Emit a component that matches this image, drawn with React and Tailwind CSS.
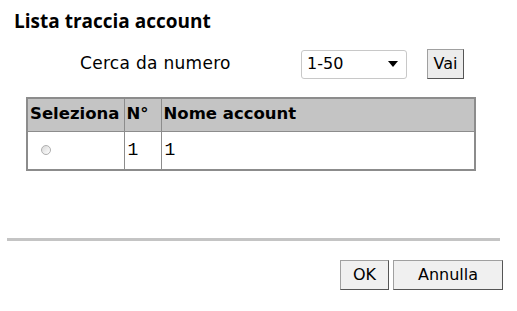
export default function App() {
  return (
    <div className="w-[517px] h-[311px] bg-white text-black relative overflow-hidden">
      <h1 className="pl-[14px] pt-[9px] text-[19px] leading-[24px] font-bold font-['Open_Sans',sans-serif]">
        Lista traccia account
      </h1>

      <div className="flex items-center mt-[16px] h-[30px]">
        <span className="ml-[80px] w-[221px] text-[17px] tracking-[0.3px] font-['DejaVu_Sans',sans-serif]">
          Cerca da numero
        </span>
        <div className="w-[106px] h-[29px] border border-[#c8c8c8] rounded-[3px] flex items-center justify-between pl-[5px] pr-[7px] text-[16px] font-['DejaVu_Sans',sans-serif]">
          <span>1-50</span>
          <svg width="12" height="8" viewBox="0 0 12 8">
            <path d="M1 1 L11 1 L6 7 Z" fill="#000" />
          </svg>
        </div>
        <button className="ml-[20px] w-[37px] h-[30px] bg-[#ececec] border border-[#a0a0a0] border-r-[#555] border-b-[#555] text-[16px] font-['DejaVu_Sans',sans-serif]">
          Vai
        </button>
      </div>

      <table className="ml-[26px] mt-[18px] w-[450px] border-collapse border-2 border-[#8c8c8c] font-['DejaVu_Sans',sans-serif] text-[16.5px]">
        <thead>
          <tr className="bg-[#c4c4c4] h-[33px]">
            <th className="w-[97px] border border-[#8c8c8c] text-left font-bold px-[2px]">Seleziona</th>
            <th className="w-[37px] border border-[#8c8c8c] text-left font-bold px-[2px]">N°</th>
            <th className="border border-[#8c8c8c] text-left font-bold px-[2px]">Nome account</th>
          </tr>
        </thead>
        <tbody>
          <tr className="h-[39px]">
            <td className="border border-[#8c8c8c] px-[13px]">
              <span className="inline-block w-[10px] h-[10px] rounded-full border border-[#b0b0b0] bg-gradient-to-br from-[#d8d8d8] to-white align-middle"></span>
            </td>
            <td className="border border-[#8c8c8c] px-[3px] text-[18px] font-['Liberation_Mono',monospace]">1</td>
            <td className="border border-[#8c8c8c] px-[3px] text-[18px] font-['Liberation_Mono',monospace]">1</td>
          </tr>
        </tbody>
      </table>

      <div className="mx-[7px] mr-[17px] mt-[67px] h-[3px] bg-[#c4c4c4]"></div>

      <div className="flex justify-end gap-[4px] pr-[14px] mt-[19px]">
        <button className="w-[49px] h-[30px] bg-[#f0f0f0] border border-[#a0a0a0] border-r-[#555] border-b-[#555] text-[16px] font-['DejaVu_Sans',sans-serif]">
          OK
        </button>
        <button className="w-[110px] h-[30px] bg-[#f0f0f0] border border-[#a0a0a0] border-r-[#555] border-b-[#555] text-[16px] font-['DejaVu_Sans',sans-serif]">
          Annulla
        </button>
      </div>
    </div>
  );
}
